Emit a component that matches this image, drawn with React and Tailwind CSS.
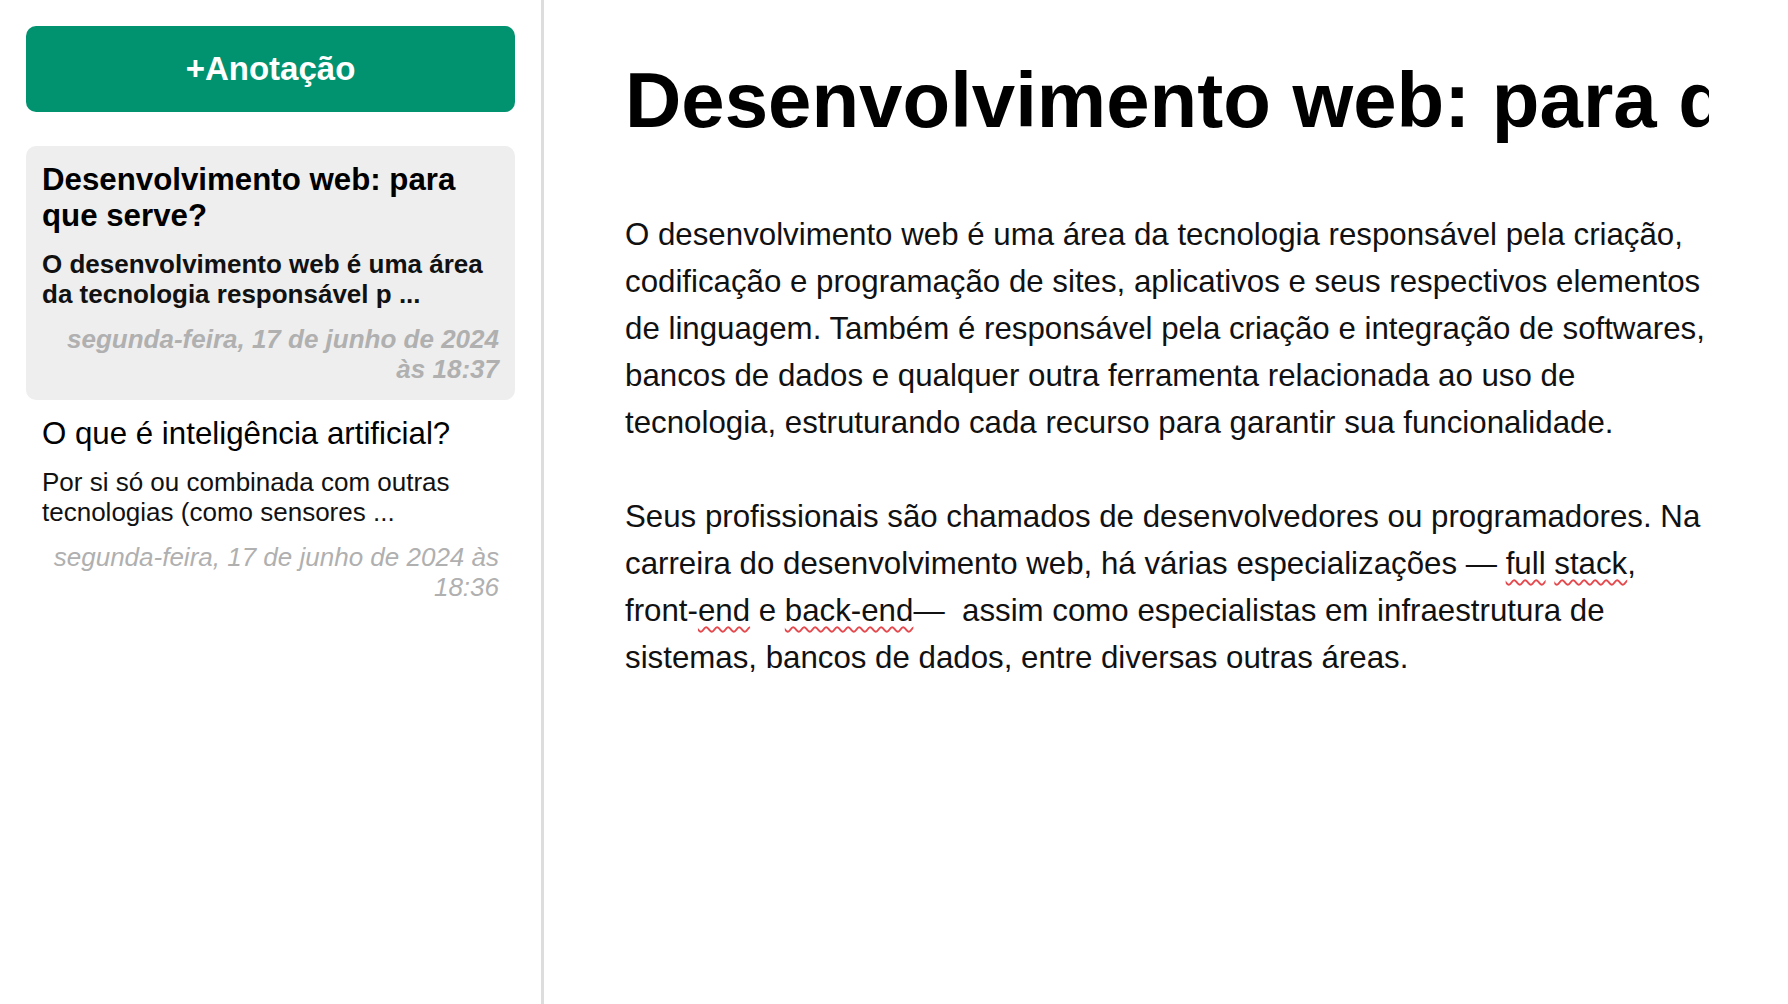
import React from 'react';

const notes = [
    {
        id: 1,
        title: 'Desenvolvimento web: para que serve?',
        preview: 'O desenvolvimento web é uma área da tecnologia responsável p ...',
        date: 'segunda-feira, 17 de junho de 2024 às 18:37',
        active: true
    },
    {
        id: 2,
        title: 'O que é inteligência artificial?',
        preview: 'Por si só ou combinada com outras tecnologias (como sensores ...',
        date: 'segunda-feira, 17 de junho de 2024 às 18:36',
        active: false
    }
];

// spell-check style underline
const Squiggle = ({ children }) => (
    <span className="underline decoration-wavy decoration-[#e5484d] decoration-[1.5px] underline-offset-[5px]">
        {children}
    </span>
);

const NoteItem = ({ note }) => (
    <div className={`p-4 rounded-[10px] ${note.active ? 'bg-[#eeeeee] font-bold' : ''}`}>
        <div className="text-[31.25px] leading-[36px] text-black">{note.title}</div>
        <div className="mt-[15px] text-[26px] leading-[30px] text-[#111]">{note.preview}</div>
        <div className="mt-[15px] text-[26px] leading-[30px] italic text-right text-[#b0b0b0]">
            {note.date}
        </div>
    </div>
);

export default function App() {
    return (
        <div className="flex h-screen bg-white font-['Liberation_Sans',Arial,sans-serif] overflow-hidden">
            {/* Sidebar */}
            <aside className="w-[544px] shrink-0 border-r-[3px] border-[#dddddd] px-[26px] pt-[26px]">
                <button className="w-full h-[86px] rounded-[10px] bg-[#01936f] text-white text-[33px] font-bold">
                    +Anotação
                </button>
                <div className="mt-[34px]">
                    {notes.map(note => (
                        <NoteItem key={note.id} note={note} />
                    ))}
                </div>
            </aside>

            {/* Editor */}
            <main className="flex-1 pl-[81px] pt-[55px]">
                <div className="w-[1084px] overflow-hidden whitespace-nowrap text-[78px] leading-[90px] font-bold text-black">
                    Desenvolvimento web: para que serve?
                </div>
                <div className="mt-[66px] w-[1088px] text-[31.25px] leading-[47px] text-[#111] whitespace-pre">
                    {'O desenvolvimento web é uma área da tecnologia responsável pela criação,\n'}
                    {'codificação e programação de sites, aplicativos e seus respectivos elementos\n'}
                    {'de linguagem. Também é responsável pela criação e integração de softwares,\n'}
                    {'bancos de dados e qualquer outra ferramenta relacionada ao uso de\n'}
                    {'tecnologia, estruturando cada recurso para garantir sua funcionalidade.\n'}
                    {'\n'}
                    {'Seus profissionais são chamados de desenvolvedores ou programadores. Na\n'}
                    {'carreira do desenvolvimento web, há várias especializações — '}
                    <Squiggle>full</Squiggle> <Squiggle>stack</Squiggle>
                    {',\nfront-'}
                    <Squiggle>end</Squiggle>
                    {' e '}
                    <Squiggle>back-end</Squiggle>
                    {'—  assim como especialistas em infraestrutura de\n'}
                    {'sistemas, bancos de dados, entre diversas outras áreas.'}
                </div>
            </main>
        </div>
    );
}
